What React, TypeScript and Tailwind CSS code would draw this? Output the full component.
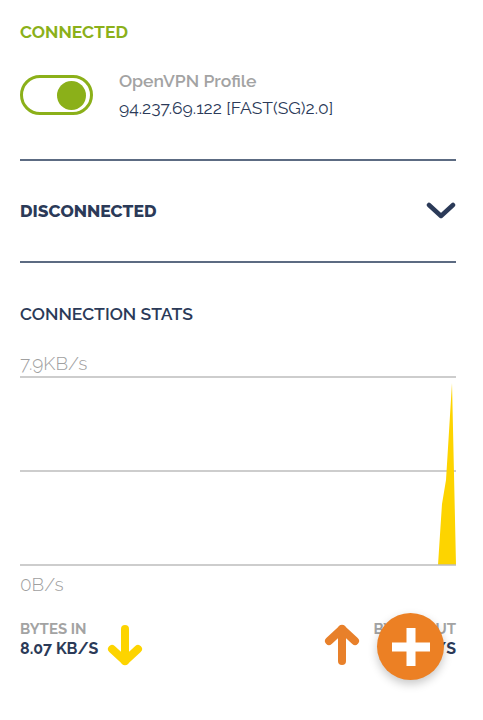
import React from "react";

const font = { fontFamily: "Raleway, 'Open Sans', 'Liberation Sans', sans-serif" };

function ArrowDown({ color }: { color: string }) {
  return (
    <svg width="36" height="42" viewBox="0 0 36 42" fill="none">
      <path d="M18 5 V37" stroke={color} strokeWidth="8" strokeLinecap="round" />
      <path d="M5 25 L18 37 L31 25" stroke={color} strokeWidth="8" strokeLinecap="round" strokeLinejoin="round" />
    </svg>
  );
}

function ArrowUp({ color }: { color: string }) {
  return (
    <svg width="36" height="42" viewBox="0 0 36 42" fill="none">
      <path d="M18 37 V5" stroke={color} strokeWidth="8" strokeLinecap="round" />
      <path d="M5 17 L18 5 L31 17" stroke={color} strokeWidth="8" strokeLinecap="round" strokeLinejoin="round" />
    </svg>
  );
}

export default function App() {
  return (
    <div className="relative w-[483px] h-[720px] bg-white overflow-hidden" style={font}>
      <div className="ml-5 w-[436px] flex flex-col">
        {/* connected */}
        <div className="pt-[21px] box-content text-[17.5px] font-bold leading-[22px] text-[#8bb019]">
          CONNECTED
        </div>
        <div className="mt-[32px] h-[40px] flex items-start">
          <div className="w-[73px] h-[40px] shrink-0 rounded-full border-[3px] border-[#8bb019] flex items-center justify-end pr-[4px]">
            <div className="w-[29px] h-[29px] rounded-full bg-[#8bb019]" />
          </div>
          <div className="ml-[26px] -mt-[5px] flex flex-col">
            <div className="text-[17.5px] font-semibold leading-[22px] text-[#a3a3a3]">OpenVPN Profile</div>
            <div className="mt-[5px] text-[17.5px] leading-[22px] text-[#2b3a58]">94.237.69.122 [FAST(SG)2.0]</div>
          </div>
        </div>

        <div className="mt-[44px] h-[2px] bg-[#5c6b82]" />

        <div className="h-[100px] flex items-center justify-between">
          <span className="text-[17.5px] font-extrabold text-[#2b3a58]">DISCONNECTED</span>
          <svg width="30" height="18" viewBox="0 0 30 18" fill="none">
            <path d="M3 3 L15 14 L27 3" stroke="#2b3a58" strokeWidth="4.5" strokeLinecap="round" strokeLinejoin="round" />
          </svg>
        </div>

        <div className="h-[2px] bg-[#5c6b82]" />

        <div className="mt-[40px] text-[17.5px] font-semibold leading-[22px] text-[#2b3a58]">CONNECTION STATS</div>

        <div className="mt-[26px] text-[19px] font-light leading-[24px] text-[#a0a0a0]">7.9KB/s</div>
        <svg width="436" height="190" viewBox="0 0 436 190" className="block mt-[1px]">
          <line x1="0" y1="1" x2="436" y2="1" stroke="#bdbdbd" strokeWidth="1.5" />
          <line x1="0" y1="95" x2="436" y2="95" stroke="#bdbdbd" strokeWidth="1.5" />
          <path d="M418 189 L422 128 L426 104 L432 7 L436 189 Z" fill="#fdd400" />
          <line x1="0" y1="189" x2="436" y2="189" stroke="#bdbdbd" strokeWidth="1.5" />
        </svg>
        <div className="mt-[6px] text-[19px] font-light leading-[24px] text-[#a0a0a0]">0B/s</div>

        <div className="mt-[24px] flex items-start justify-between">
          <div className="flex items-start">
            <div className="flex flex-col">
              <span className="text-[15px] font-bold leading-[19px] text-[#a3a3a3]">BYTES IN</span>
              <span className="text-[16px] font-bold leading-[19px] text-[#2b3a58]">8.07 KB/S</span>
            </div>
            <div className="ml-[9px] mt-[4px]">
              <ArrowDown color="#fdd400" />
            </div>
          </div>
          <div className="flex items-start">
            <div className="mt-[4px]">
              <ArrowUp color="#e8802a" />
            </div>
            <div className="ml-[13px] flex flex-col items-end">
              <span className="text-[15px] font-bold leading-[19px] text-[#a3a3a3]">BYTES OUT</span>
              <span className="text-[16px] font-bold leading-[19px] text-[#2b3a58]">4.26 KB/S</span>
            </div>
          </div>
        </div>
      </div>

      {/* floating action button */}
      <button className="absolute left-[377px] top-[613px] w-[67px] h-[67px] rounded-full bg-[#ec8024] flex items-center justify-center shadow-[0_4px_10px_rgba(0,0,0,0.22)]">
        <svg width="38" height="38" viewBox="0 0 38 38">
          <rect x="14.5" y="0" width="9" height="38" fill="#fff" />
          <rect x="0" y="14.5" width="38" height="9" fill="#fff" />
        </svg>
      </button>
    </div>
  );
}
